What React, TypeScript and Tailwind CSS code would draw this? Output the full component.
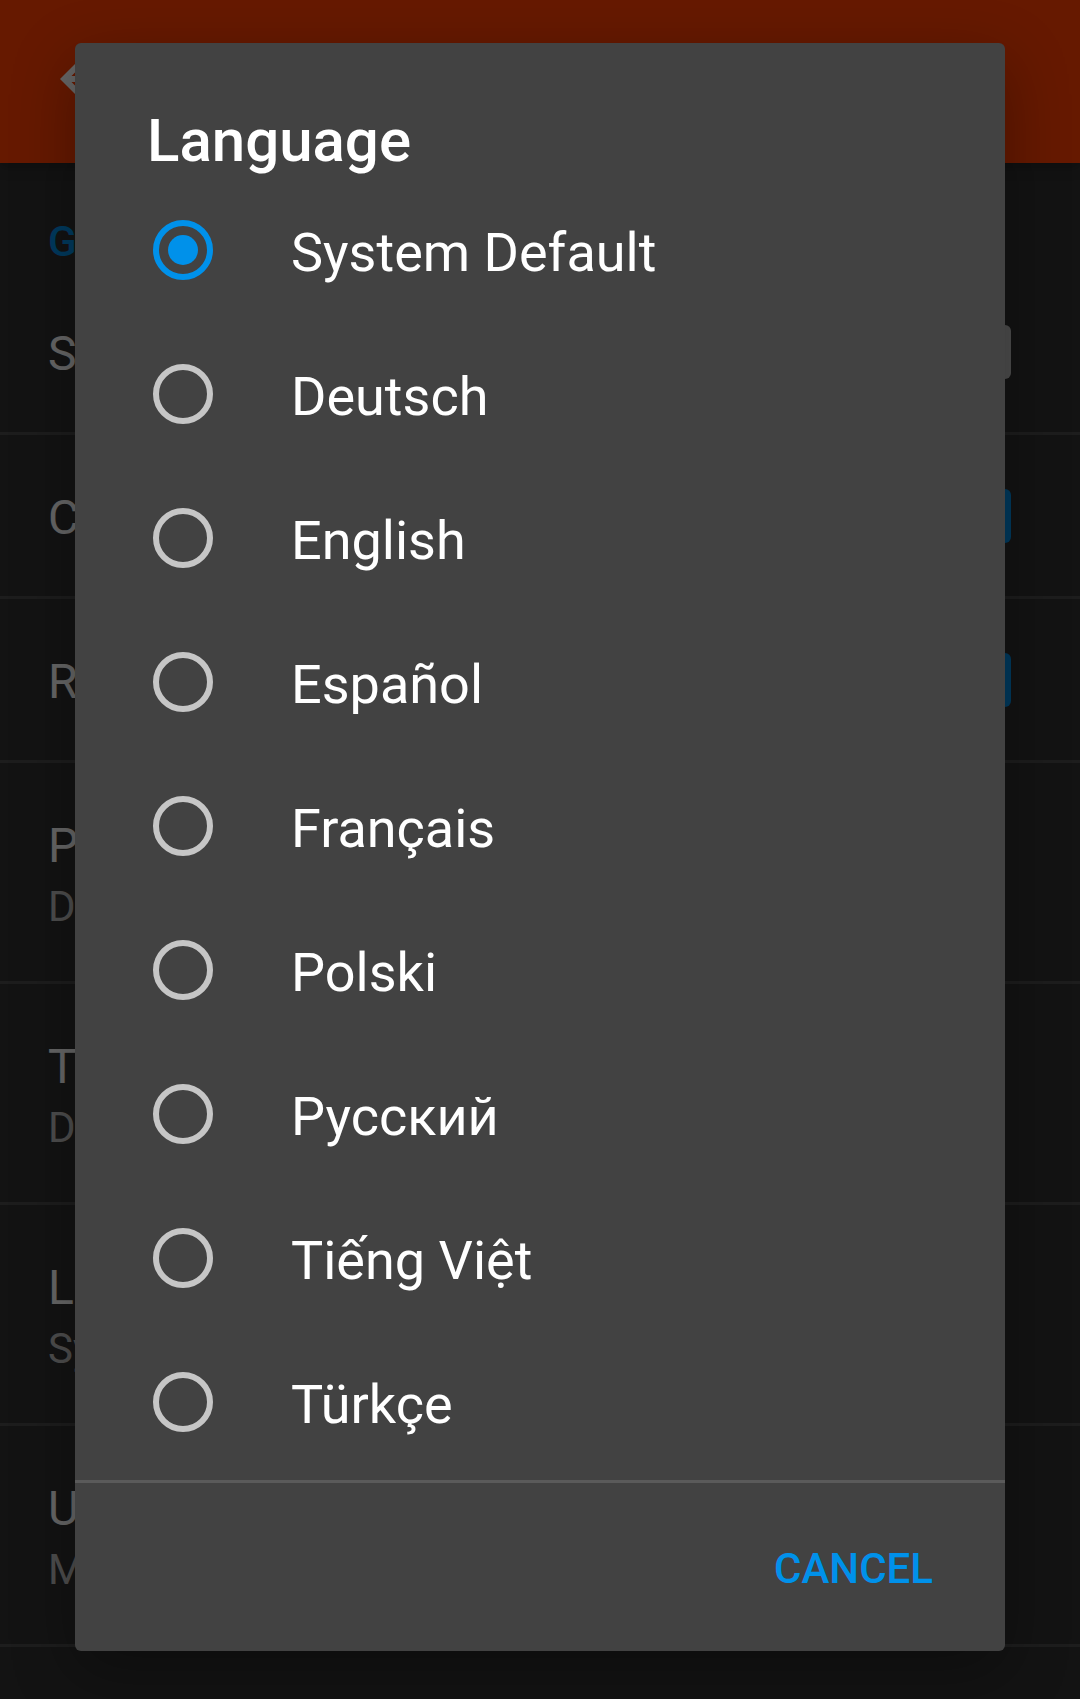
import { useState } from 'react';

const languages = [
  'System Default',
  'Deutsch',
  'English',
  'Español',
  'Français',
  'Polski',
  'Русский',
  'Tiếng Việt',
  'Türkçe',
];

const toggles = [
  { id: 'toggle-s', title: 'S', checked: false },
  { id: 'toggle-c', title: 'C', checked: true },
  { id: 'toggle-r', title: 'R', checked: true },
];

const preferences = [
  { title: 'P', summary: 'D' },
  { title: 'T', summary: 'D' },
  { title: 'L', summary: 'Sy' },
  { title: 'U', summary: 'M' },
];

function SettingsPage() {
  return (
    <div inert className="flex min-h-screen flex-col bg-[#303030] text-white">
      <header className="flex h-[163px] items-center bg-[#ff4000] px-12 pb-[5px] shadow-[0_4px_12px_rgba(0,0,0,0.25)]">
        <button type="button" aria-label="Back">
          <svg viewBox="0 0 24 24" className="size-[72px] fill-white">
            <path d="M20 11H7.83l5.59-5.59L12 4l-8 8 8 8 1.41-1.41L7.83 13H20v-2z" />
          </svg>
        </button>
      </header>
      <main>
        <h2 className="px-12 pt-[54px] pb-1 text-[42px] leading-[50px] font-medium text-[#0091ea]">G</h2>
        <ul>
          {toggles.map((t) => (
            <li key={t.id} className="border-b-[3px] border-[#4a4a4a]">
              <label htmlFor={t.id} className="flex h-[161px] items-center justify-between pr-[69px] pl-12">
                <span className="pt-1 text-[48px] leading-[56px]">{t.title}</span>
                <input
                  id={t.id}
                  type="checkbox"
                  defaultChecked={t.checked}
                  className="size-[54px] appearance-none rounded-md bg-[#c1c1c1] checked:bg-[#0091ea]"
                />
              </label>
            </li>
          ))}
          {preferences.map((p) => (
            <li key={p.title} className="flex flex-col gap-2 border-b-[3px] border-[#4a4a4a] px-12 pt-[55px] pb-[49px]">
              <span className="text-[48px] leading-[56px]">{p.title}</span>
              <span className="text-[42px] leading-[50px] text-[#c1c1c1]">{p.summary}</span>
            </li>
          ))}
        </ul>
      </main>
    </div>
  );
}

function LanguageDialog() {
  const [selected, setSelected] = useState(languages[0]);
  return (
    <div className="absolute inset-0 flex items-start bg-black/60 px-[75px] pt-[43px]">
      <div
        role="dialog"
        aria-labelledby="dialog-title"
        className="flex-1 rounded-md bg-[#424242] text-white shadow-[0_20px_64px_rgba(0,0,0,0.32)]"
      >
        <h1 id="dialog-title" className="px-[72px] pt-[63px] pb-[2px] text-[60px] leading-[70px] font-medium">
          Language
        </h1>
        <div role="radiogroup" aria-labelledby="dialog-title" className="pb-[6px]">
          {languages.map((name) => (
            <label key={name} className="flex h-36 items-center gap-[78px] px-[78px]">
              <input
                type="radio"
                name="language"
                value={name}
                checked={selected === name}
                onChange={() => setSelected(name)}
                className="grid size-[60px] shrink-0 appearance-none place-items-center rounded-full border-[6px] border-[#c6c6c6] before:size-[30px] before:rounded-full checked:border-[#0091ea] checked:before:bg-[#0091ea]"
              />
              <span className="pt-[5px] text-[54px] leading-[64px]">{name}</span>
            </label>
          ))}
        </div>
        <div className="flex h-[171px] items-center justify-end border-t-[3px] border-[#5a5a5a] px-[72px] pt-1">
          <button type="button" className="text-[42px] leading-[50px] font-medium text-[#0091ea]">
            CANCEL
          </button>
        </div>
      </div>
    </div>
  );
}

export default function App() {
  return (
    <div className="relative min-h-screen overflow-hidden font-[Roboto,sans-serif]">
      <SettingsPage />
      <LanguageDialog />
    </div>
  );
}
